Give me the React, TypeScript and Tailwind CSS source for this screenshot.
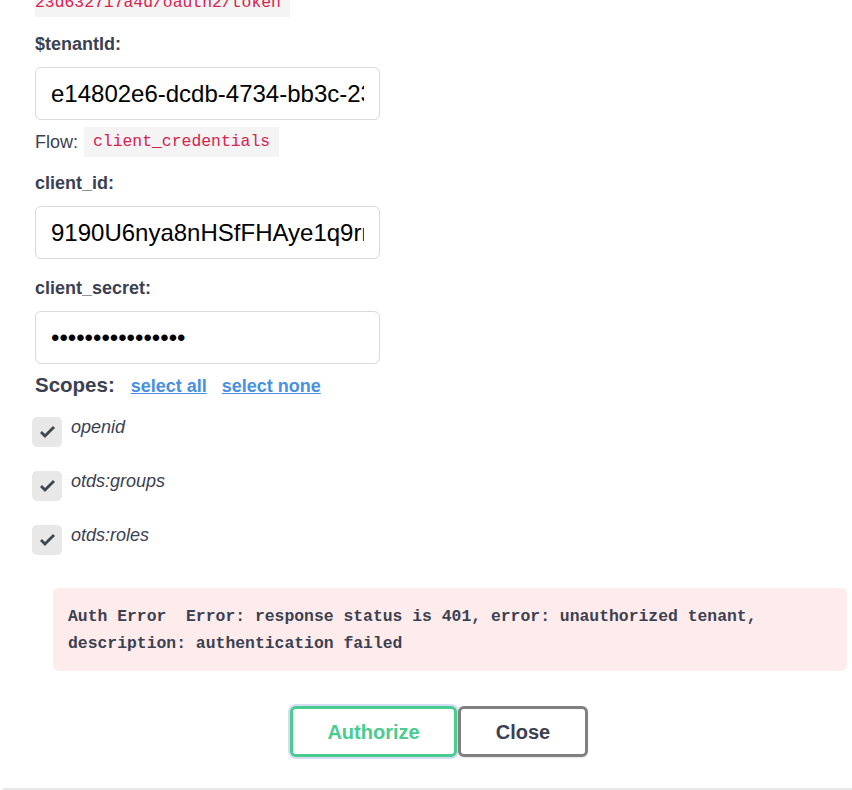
import React from "react";

const sans = "font-['Liberation_Sans',Arial,sans-serif]";
const mono = "font-['Liberation_Mono','DejaVu_Sans_Mono',monospace]";

function Label({ text, mt }: { text: string; mt: string }) {
  return (
    <div className={`${mt} h-[21px] text-[18px] leading-[21px] font-bold text-[#3b4151]`}>
      {text}
    </div>
  );
}

function Field({ value, type = "text" }: { value: string; type?: string }) {
  return (
    <input
      type={type}
      defaultValue={value}
      readOnly
      className={`${sans} mt-[12px] block h-[53px] w-[345px] rounded-[6px] border border-[#d9d9d9] bg-white px-[15px] text-[24px] text-black outline-none`}
    />
  );
}

function CheckIcon() {
  return (
    <svg width="15" height="12" viewBox="3 7 10 8" aria-hidden="true">
      <path
        fill="#41474E"
        fillRule="evenodd"
        d="M6.333 15L3 11.667l1.333-1.334 2 2L11.667 7 13 8.333z"
      />
    </svg>
  );
}

function Scope({ name, mt }: { name: string; mt: string }) {
  return (
    <div className={`${mt} -ml-[3px] flex items-start`}>
      <div className="flex h-[30px] w-[30px] items-center justify-center rounded-[5px] bg-[#e8e8e8]">
        <CheckIcon />
      </div>
      <span className="ml-[9px] text-[18px] leading-[21px] italic text-[#3b4151]">
        {name}
      </span>
    </div>
  );
}

export default function App() {
  return (
    <div className={`${sans} relative h-[790px] w-[852px] overflow-hidden bg-white`}>
      <div className="pl-[35px]">
        <div className="-mt-[13px] h-[30px]">
          <code
            className={`${mono} block h-[30px] w-fit bg-[#f4f4f4] pr-[9px] text-[16.4px] leading-[32px] text-[#d9214e]`}
          >
            23d632717a4d/oauth2/token
          </code>
        </div>

        <Label text="$tenantId:" mt="mt-[17px]" />
        <Field value="e14802e6-dcdb-4734-bb3c-23d632717a4d" />

        <div className="mt-[7px] flex h-[30px] items-center">
          <span className="text-[18px] leading-[21px] text-[#3b4151]">Flow:</span>
          <code
            className={`${mono} ml-[6px] h-[30px] bg-[#f4f4f4] px-[9px] text-[16.4px] leading-[30px] text-[#d9214e]`}
          >
            client_credentials
          </code>
        </div>

        <Label text="client_id:" mt="mt-[16px]" />
        <Field value="9190U6nya8nHSfFHAye1q9rnXk2LpQ" />

        <Label text="client_secret:" mt="mt-[19px]" />
        <Field value="abcdefghijklmnop" type="password" />

        <div className="mt-[9px] flex h-[24px] items-baseline">
          <span className="text-[20.5px] leading-[24px] font-bold text-[#3b4151]">Scopes:</span>
          <a className="ml-[16px] text-[18px] font-bold text-[#4990e2] underline">select all</a>
          <a className="ml-[15px] text-[18px] font-bold text-[#4990e2] underline">select none</a>
        </div>

        <Scope name="openid" mt="mt-[20px]" />
        <Scope name="otds:groups" mt="mt-[24px]" />
        <Scope name="otds:roles" mt="mt-[24px]" />

        <div
          className={`${mono} ml-[18px] mt-[33px] h-[83px] w-[794px] rounded-[6px] bg-[#feecec] px-[15px] pt-[15px] pb-[14px] text-[16.4px] leading-[27px] font-bold whitespace-pre-wrap text-[#3b4151]`}
        >
          {"Auth Error  Error: response status is 401, error: unauthorized tenant, description: authentication failed"}
        </div>

        <div className="mt-[35px] flex justify-center pr-[9px]">
          <button className="h-[51px] w-[167px] rounded-[6px] border-[3px] border-[#49cc90] bg-white text-[20px] font-bold text-[#49cc90] shadow-[0_0_0_2px_#d7dcf5]">
            Authorize
          </button>
          <button className="ml-[1px] h-[51px] w-[130px] rounded-[6px] border-[3px] border-[#808080] bg-white text-[20px] font-bold text-[#3b4151] shadow-[0_1px_2px_rgba(0,0,0,0.1)]">
            Close
          </button>
        </div>
      </div>
      <div className="ml-[3px] mt-[31px] h-[2px] bg-[#e8e8e8]" />
    </div>
  );
}
